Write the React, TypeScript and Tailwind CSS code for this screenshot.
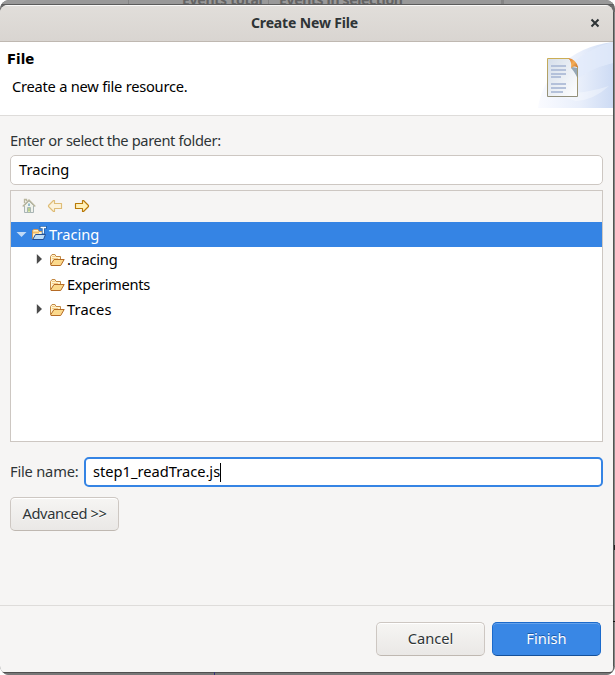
import type { ReactNode } from 'react';

function Folder() {
  return (
    <svg width="16" height="14" viewBox="0 0 16 14" className="shrink-0">
      <path d="M1.5 11.5V3.5L3 1.5H6L7 3.5H11.5V6" fill="#fff3cf" stroke="#c48a45" />
      <path d="M1.5 12L5 6.5H15.2L11.7 12.5H2Z" fill="#fbd98c" stroke="#b56b26" strokeLinejoin="round" />
      <path d="M3 3.5H6M3 5.5H9" stroke="#f5cc86" />
    </svg>
  );
}

function ProjectFolder() {
  return (
    <svg width="17" height="16" viewBox="0 0 17 16" className="shrink-0">
      <path d="M1.5 13V4.5L3 3.5H7L8 5.5H12V9" fill="#fff0c9" stroke="#d69a58" />
      <path d="M1.7 13.5L4.5 8.5H14.5L12.5 13.5Z" fill="#bcdcf8" stroke="#234f96" strokeLinejoin="round" />
      <path d="M2 6.5H8" stroke="#f1bd69" strokeWidth="2" />
      <path d="M8.5 0H16V3H13.8V8H10.8V3H8.5Z" fill="#2764aa" />
      <path d="M9.5 1.5H15M12.3 1.5V7.5" stroke="#fff" strokeWidth="1.3" />
    </svg>
  );
}

function HomeIcon() {
  return (
    <svg width="14" height="16" viewBox="0 0 14 16">
      <path d="M2.5 7.5V14.5H11.5V7.5L7 3Z" fill="#f0f2eb" stroke="#a9b4b5" />
      <path d="M.7 8.5L7 2L13.3 8.5M2.5 5V1.5H4.5V3" fill="none" stroke="#b9b69d" strokeWidth="1.3" />
      <path d="M6 5.5H8V8H6Z" fill="#95bdcc" />
      <path d="M5.5 9.5H8.5V14.5H5.5Z" fill="#dfe7ae" stroke="#a9b7b4" />
      <path d="M7 10V13" stroke="#92b668" />
    </svg>
  );
}

function Arrow({ back = false }: { back?: boolean }) {
  return (
    <svg width="16" height="14" viewBox="0 0 16 14" className={back ? 'rotate-180' : ''}>
      <path d="M1.5 4.5H8.5V1.5H9.5L14.5 6.5V7.5L9.5 12.5H8.5V9.5H1.5Z" fill={back ? '#fcf3dc' : '#fff0b8'} stroke={back ? '#dfbd78' : '#b97a09'} strokeWidth="1.15" strokeLinejoin="round" />
    </svg>
  );
}

function WizardBanner() {
  return (
    <svg width="78" height="66" viewBox="0 0 78 66">
      <defs>
        <linearGradient id="sky"><stop stopColor="#fafbff" /><stop offset=".55" stopColor="#e9effb" /><stop offset="1" stopColor="#cddbf4" /></linearGradient>
        <linearGradient id="page" x2="1" y2="1"><stop stopColor="#d5deea" /><stop offset="1" stopColor="#ffffff" /></linearGradient>
        <linearGradient id="edge" x2="0" y2="1"><stop stopColor="#cbae55" /><stop offset="1" stopColor="#918f7b" /></linearGradient>
        <linearGradient id="fold" x2="1" y2="1"><stop stopColor="#dc7828" /><stop offset=".5" stopColor="#f4ad57" /><stop offset="1" stopColor="#bd6622" /></linearGradient>
      </defs>
      <path d="M3 66C7 35 34 5 78 0V66Z" fill="url(#sky)" />
      <path d="M29 28Q55 5 78 0V21Q52 27 31 45Z" fill="#e3ebfb" opacity=".7" />
      <path d="M14 51Q48 53 74 44Q59 58 41 59Z" fill="#fff" opacity=".35" />
      <path d="M12.5 16.5H34L42.5 25V54.5H12.5Z" fill="url(#page)" stroke="url(#edge)" />
      <path d="M37 25L42.5 26V36Q39 29 36 26Z" fill="#71889b" opacity=".7" />
      <path d="M33.5 16Q41 17 43.2 25.5Q38 23 36 26.5Q37 20 33.5 16Z" fill="url(#fold)" />
      <path d="M16 24H31M16 28H31M16 32H31M16 35H26M16 42H31M16 46H31M16 50H28" stroke="#b4c1da" strokeWidth="2" />
    </svg>
  );
}

function TreeRow({ label, expandable = false, spacing }: { label: string; expandable?: boolean; spacing: string }) {
  return (
    <div className="flex h-[25px] items-center pl-[24px] text-black">
      <span className="flex w-[14px] items-center">
        {expandable && <svg width="9" height="12" viewBox="0 0 9 12" className="mb-[2px]"><path d="M1.8 1L7 6L1.8 11Z" fill="#4b4b4b" /></svg>}
      </span>
      <Folder />
      <span className={`ml-[2px] leading-[25px] ${spacing}`}>{label}</span>
    </div>
  );
}

function Button({ children, primary = false }: { children: ReactNode; primary?: boolean }) {
  return (
    <button className={`h-[34px] w-[109px] shrink-0 rounded-[5px] border pb-[3px] text-center ${primary ? 'border-[#1b6acb] border-b-[#155099] bg-[#3987e5] text-white shadow-[inset_0_1px_#65a2eb] [text-shadow:0_-1px_#1b5aa8]' : 'border-[#cdc7c2] border-b-[#bfb8b1] bg-linear-to-b from-[#f6f5f3] to-[#eae8e6] shadow-[inset_0_1px_#fff] [text-shadow:0_1px_#fff]'}`}>
      {children}
    </button>
  );
}

export default function App() {
  return (
    <div className="relative h-[675px] w-[615px] overflow-hidden rounded-[9px] bg-[#6b6b6b] font-['Noto_Sans',sans-serif] text-[14.67px] text-[#2e3436]">
      <div className="absolute inset-x-0 top-0 h-[5px] overflow-hidden border-b border-[#5c5c5c] bg-[#999] text-[14px] font-bold text-[#646464]">
        <span className="absolute top-[-10px] left-[182px] leading-[20px] tracking-[-0.25px]">Events total</span>
        <span className="absolute top-[-10px] left-[279px] leading-[20px] tracking-[-0.35px]">Events in selection</span>
        <i className="absolute left-[128px] h-full w-px bg-[#858585]" />
        <i className="absolute left-[268px] h-full w-px bg-[#858585]" />
        <i className="absolute left-[501px] h-full w-[3px] bg-[#858585]" />
      </div>
      <div className="absolute top-[5px] left-0 flex h-[667px] w-[613px] flex-col overflow-hidden rounded-t-[8px] rounded-b-[4px] bg-[#f6f5f4]">
        <header className="relative flex h-[37px] shrink-0 items-center justify-center border-t border-b border-t-[#faf9f8] border-b-[#bfb8b1] bg-linear-to-b from-[#e1deda] to-[#d9d5d1] pr-[4px] pb-[2px] text-[14px] font-bold">
          <span className="tracking-[-0.15px]">Create New File</span>
          <svg className="absolute top-[12px] right-[13px]" width="10" height="10" viewBox="0 0 10 10"><path d="M1.5 1.5L8.5 8.5M8.5 1.5L1.5 8.5" stroke="#2e3436" strokeWidth="2" /></svg>
        </header>
        <section className="flex h-[74px] shrink-0 justify-between border-b border-[#dedcda] bg-white text-black">
          <div className="pl-[7px] pt-[8px]">
            <h1 className="font-['DejaVu_Sans',sans-serif] text-[13.33px] leading-[20px] font-bold">File</h1>
            <p className="ml-[5px] mt-[5px] leading-[22px] tracking-[-0.24px]">Create a new file resource.</p>
          </div>
          <WizardBanner />
        </section>
        <main className="flex h-[489px] shrink-0 flex-col pr-[10px] pl-[10px] pt-[13px]">
          <label className="h-[26px] leading-[22px] tracking-[-0.38px]">Enter or select the parent folder:</label>
          <div className="h-[30px] shrink-0 rounded-[5px] border border-[#cdc7c2] bg-white pl-[8px] leading-[27px] text-black">Tracing</div>
          <div className="mt-[5px] h-[252px] shrink-0 border border-[#cdc7c2] bg-white">
            <div className="flex h-[31px] items-center gap-[11px] bg-[#f6f5f4] pb-px pl-[11px]">
              <HomeIcon /><Arrow back /><Arrow />
            </div>
            <div className="flex h-[25px] items-center bg-[#3584e4] pl-[5px] text-white">
              <svg width="11" height="7" viewBox="0 0 11 7"><path d="M.5 1H10.5L5.5 6Z" fill="#c1daf7" /></svg>
              <span className="mb-[2px] ml-[4px]"><ProjectFolder /></span>
              <span className="ml-px leading-[25px]">Tracing</span>
            </div>
            <TreeRow label=".tracing" expandable spacing="tracking-[-0.2px]" />
            <TreeRow label="Experiments" spacing="tracking-[-0.32px]" />
            <TreeRow label="Traces" expandable spacing="tracking-[0.15px]" />
          </div>
          <div className="mt-[15px] flex h-[30px] shrink-0 items-center">
            <label className="w-[74px] pb-[2px] tracking-[-0.2px] whitespace-nowrap">File name:</label>
            <div className="flex h-[30px] flex-1 items-center rounded-[5px] border-2 border-[#3584e4] bg-white pl-[7px] text-black">
              <span className="pb-[2px]">step1_readTrace.js</span><span className="h-[19px] w-px bg-black" />
            </div>
          </div>
          <div className="mt-[10px]"><Button><span className="tracking-[-0.35px]">Advanced &gt;&gt;</span></Button></div>
        </main>
        <footer className="flex h-[67px] shrink-0 items-center justify-end gap-[7px] border-t border-[#dedcda] pr-[12px]">
          <Button>Cancel</Button><Button primary>Finish</Button>
        </footer>
      </div>
      <div className="absolute top-[12px] right-0 h-[654px] w-[2px] border-l border-[#515452] bg-[#858786]" />
      <div className="absolute inset-x-[4px] bottom-0 h-[3px] border-t border-[#505050] bg-[#777]" />
      <i className="absolute bottom-0 left-[214px] h-[3px] w-px bg-[#373578]" />
      <i className="absolute right-0 top-[621px] h-px w-[2px] bg-[#111]" />
      <i className="absolute right-0 top-[545px] h-[5px] w-px bg-[#222]" />
    </div>
  );
}
